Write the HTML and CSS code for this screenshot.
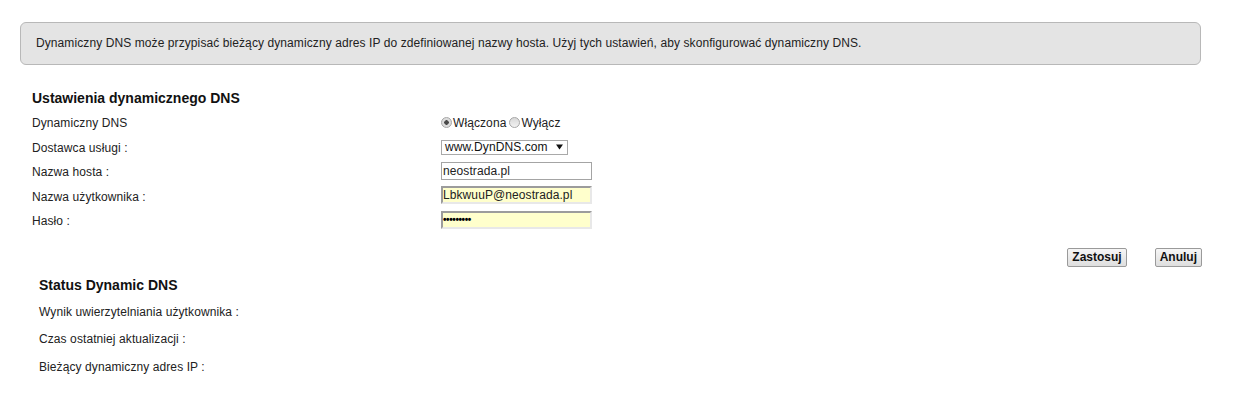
FILE: index.html
```html
<!DOCTYPE html>
<html lang="pl">
<head>
  <meta charset="UTF-8">
  <meta name="viewport" content="width=device-width, initial-scale=1.0">
  <title>Dynamiczny DNS</title>
  <link rel="stylesheet" href="styles.css">
</head>
<body>
  <div class="info">
    Dynamiczny DNS może przypisać bieżący dynamiczny adres IP do zdefiniowanej nazwy hosta. Użyj tych ustawień, aby skonfigurować dynamiczny DNS.
  </div>

  <div class="settings">
    <h3>Ustawienia dynamicznego DNS</h3>
    <div class="form">
      <div class="row">
        <span class="label">Dynamiczny DNS</span>
        <div class="ctl">
          <label class="opt"><input type="radio" name="ddns" checked>Włączona</label>
          <label class="opt"><input type="radio" name="ddns">Wyłącz</label>
        </div>
      </div>
      <div class="row">
        <span class="label">Dostawca usługi :</span>
        <div class="ctl">
          <div class="select">
            <span>www.DynDNS.com</span>
            <svg class="arrow" width="7" height="6" viewBox="0 0 7 6"><path d="M0 0.5h7L3.5 5.5z" fill="#111"/></svg>
          </div>
        </div>
      </div>
      <div class="row">
        <span class="label">Nazwa hosta :</span>
        <div class="ctl"><input class="text" type="text" value="neostrada.pl"></div>
      </div>
      <div class="row">
        <span class="label">Nazwa użytkownika :</span>
        <div class="ctl"><input class="text filled" type="text" value="LbkwuuP@neostrada.pl"></div>
      </div>
      <div class="row">
        <span class="label">Hasło :</span>
        <div class="ctl"><input class="text filled pass" type="password" value="123456789"></div>
      </div>
    </div>
  </div>

  <div class="actions">
    <button>Zastosuj</button>
    <button>Anuluj</button>
  </div>

  <div class="status">
    <h3>Status Dynamic DNS</h3>
    <div class="srow">Wynik uwierzytelniania użytkownika :</div>
    <div class="srow">Czas ostatniej aktualizacji :</div>
    <div class="srow">Bieżący dynamiczny adres IP :</div>
  </div>
</body>
</html>
```

FILE: styles.css
```css
body {
  margin: 0;
  padding-top: 22px;
  font-family: "Liberation Sans", Arial, sans-serif;
  font-size: 12px;
  letter-spacing: 0.09px;
  color: #222;
  background: #fff;
}
.info {
  margin: 0 43px 0 20px;
  padding-left: 15px;
  line-height: 41px;
  background: #e4e4e4;
  border: 1px solid #b8b8b8;
  border-radius: 6px;
}
h3 {
  margin: 0;
  font-size: 14px;
  line-height: 16px;
  letter-spacing: 0;
  color: #111;
}
.settings {
  margin-top: 25px;
  padding-left: 32px;
}
.settings h3 {
  margin-bottom: 5px;
}
.row {
  display: flex;
  align-items: center;
  height: 24.5px;
}
.label {
  width: 408px;
}
.ctl {
  display: flex;
  align-items: center;
  padding-left: 1px;
}
.opt {
  display: flex;
  align-items: center;
  margin-right: 3px;
}
.opt input {
  appearance: none;
  width: 11px;
  height: 11px;
  margin: 0 1px 1px 0;
  border: 1px solid #a6a6a6;
  border-radius: 50%;
  background: linear-gradient(#d8d8d8, #f2f2f2);
}
.opt input:checked {
  background: radial-gradient(circle, #4a4a4a 0 2px, #dcdcdc 2.5px);
}
.select {
  display: flex;
  align-items: center;
  justify-content: space-between;
  box-sizing: border-box;
  width: 127px;
  height: 15px;
  padding: 0 4px 0 3px;
  border: 1px solid #a9a9a9;
  background: #fff;
  margin-bottom: 1px;
}
.select span {
  color: #111;
}
.text {
  box-sizing: border-box;
  width: 151px;
  height: 18px;
  margin: 0 0 3px;
  padding: 0 1px;
  font-family: inherit;
  font-size: 12px;
  letter-spacing: 0.09px;
  color: #222;
  border: 1px solid #a4a4a4;
  background: #fff;
  outline: none;
}
.filled {
  background: #ffffcc;
  border-style: solid;
  border-width: 2px;
  border-color: #9c9c9c #e8e8e8 #e8e8e8 #9c9c9c;
  padding: 0;
}
.pass {
  font-size: 10px;
  font-weight: bold;
  letter-spacing: -0.4px;
  color: #000;
}
.actions {
  display: flex;
  justify-content: flex-end;
  gap: 28px;
  margin-top: 14px;
  padding-right: 42px;
}
button {
  height: 19px;
  padding: 0 4px;
  font-family: inherit;
  font-size: 12px;
  font-weight: bold;
  color: #111;
  border: 1px solid #9a9a9a;
  border-radius: 2px;
  background: linear-gradient(#f6f6f6, #dedede);
}
.status {
  margin-top: 10px;
  padding-left: 39px;
}
.status h3 {
  margin-bottom: 6px;
}
.srow {
  line-height: 27.5px;
}
```
